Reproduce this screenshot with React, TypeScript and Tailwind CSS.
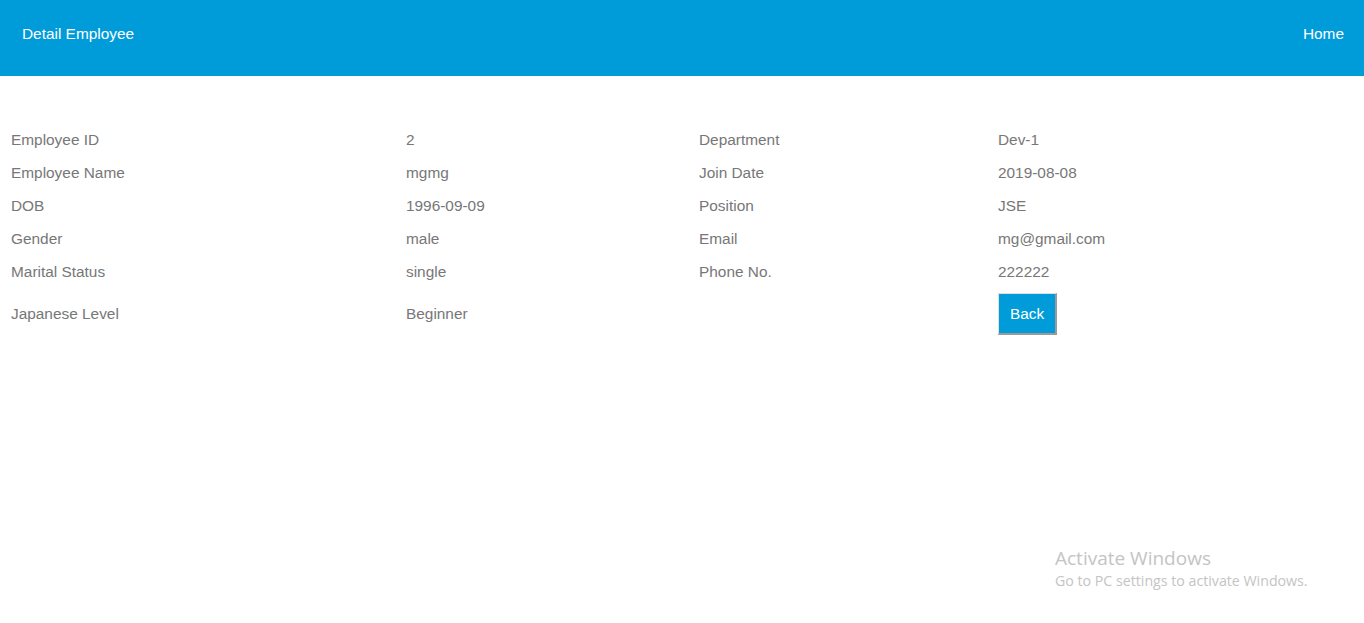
import React from "react";

const rows: [string, string, string, string][] = [
  ["Employee ID", "2", "Department", "Dev-1"],
  ["Employee Name", "mgmg", "Join Date", "2019-08-08"],
  ["DOB", "1996-09-09", "Position", "JSE"],
  ["Gender", "male", "Email", "mg@gmail.com"],
  ["Marital Status", "single", "Phone No.", "222222"],
];

export default function App() {
  return (
    <div className="relative w-full h-[623px] bg-white font-['Liberation_Sans',Arial,sans-serif] text-[15.4px]">
      <header className="h-[76px] bg-[#009bd9] flex items-center justify-between pl-[22px] pr-[20px] text-white pb-[9px]">
        <span>Detail Employee</span>
        <span>Home</span>
      </header>
      <div className="pt-[47px] text-[#777]">
        <div className="grid grid-cols-[395px_293px_299px_1fr]">
          {rows.map((r, i) => (
            <React.Fragment key={i}>
              {r.map((c, j) => (
                <div key={j} className="h-[33px] pl-[11px] flex items-center">
                  {c}
                </div>
              ))}
            </React.Fragment>
          ))}
          <div className="h-[51px] pl-[11px] flex items-center">Japanese Level</div>
          <div className="h-[51px] pl-[11px] flex items-center">Beginner</div>
          <div className="h-[51px] pl-[11px]"></div>
          <div className="h-[51px] pl-[11px] flex items-center">
            <button className="h-[42px] w-[59px] pt-[2px] bg-[#009bd9] text-white border-t border-l border-t-[#e0e0e0] border-l-[#e0e0e0] border-r-2 border-b-2 border-r-[#9a9a9a] border-b-[#9a9a9a]">
              Back
            </button>
          </div>
        </div>
      </div>
      <div className="absolute left-[1055px] top-[547px] font-['Open_Sans',sans-serif] text-[#c4c4c4] leading-tight">
        <div className="text-[19px]">Activate Windows</div>
        <div className="text-[14.2px] mt-[1px]">Go to PC settings to activate Windows.</div>
      </div>
    </div>
  );
}
